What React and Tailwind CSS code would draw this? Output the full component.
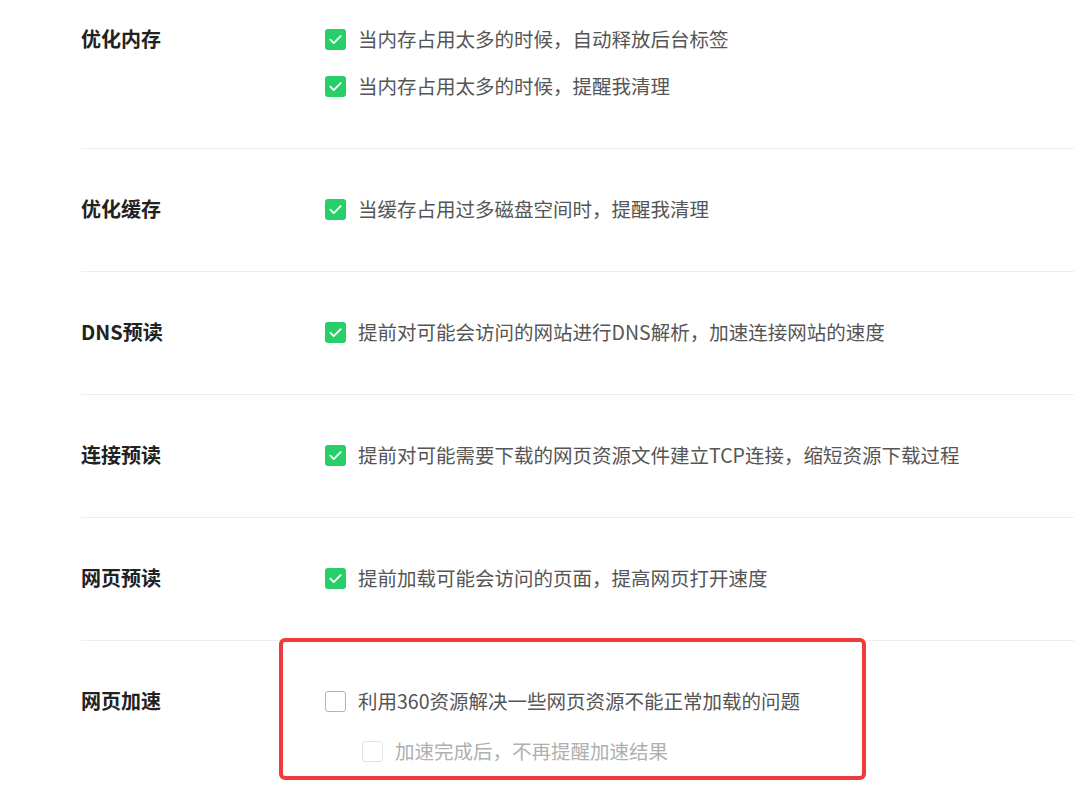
import React from 'react';

const sections = [
  {
    label: '优化内存',
    options: [
      { text: '当内存占用太多的时候，自动释放后台标签', checked: true },
      { text: '当内存占用太多的时候，提醒我清理', checked: true },
    ],
  },
  { label: '优化缓存', options: [{ text: '当缓存占用过多磁盘空间时，提醒我清理', checked: true }] },
  { label: 'DNS预读', options: [{ text: '提前对可能会访问的网站进行DNS解析，加速连接网站的速度', checked: true }] },
  { label: '连接预读', options: [{ text: '提前对可能需要下载的网页资源文件建立TCP连接，缩短资源下载过程', checked: true }] },
  { label: '网页预读', options: [{ text: '提前加载可能会访问的页面，提高网页打开速度', checked: true }] },
  {
    label: '网页加速',
    options: [
      { text: '利用360资源解决一些网页资源不能正常加载的问题', checked: false },
      { text: '加速完成后，不再提醒加速结果', checked: false, disabled: true, indent: true },
    ],
  },
];

const Checkbox = ({ checked, disabled }) => {
  if (checked) {
    return (
      <span className="w-[21px] h-[21px] rounded-[3px] bg-[#26cf68] flex items-center justify-center shrink-0">
        <svg width="15" height="15" viewBox="0 0 16 16" fill="none">
          <path d="M2.5 8.2l3.6 3.6 7.4-7.4" stroke="#fff" strokeWidth="2" strokeLinecap="round" strokeLinejoin="round" />
        </svg>
      </span>
    );
  }
  return (
    <span
      className={`w-[21px] h-[21px] rounded-[3px] border-[1.5px] bg-white shrink-0 ${
        disabled ? 'border-[#e2e2e2]' : 'border-[#b4b4b4]'
      }`}
    />
  );
};

const Section = ({ section, first, last }) => (
  <div
    className={`flex border-[#eeeeee] ${last ? '' : 'border-b'} ${first ? 'pt-[24px]' : 'pt-[45px]'} ${
      last ? 'pb-[30px]' : 'pb-[47px]'
    }`}
  >
    <div className="w-[244px] shrink-0 text-[20px] leading-[30px] font-bold text-[#222]">{section.label}</div>
    <div className={`flex flex-col ${last ? 'gap-[20px]' : 'gap-[17px]'}`}>
      {section.options.map((opt) => (
        <label key={opt.text} className={`flex items-center gap-[12px] h-[30px] ${opt.indent ? 'pl-[37px]' : ''}`}>
          <Checkbox checked={opt.checked} disabled={opt.disabled} />
          <span className={`text-[19.5px] leading-[30px] ${opt.disabled ? 'text-[#b0b0b0]' : 'text-[#555]'}`}>{opt.text}</span>
        </label>
      ))}
    </div>
  </div>
);

export default function App() {
  return (
    <div
      className="w-[1074px] h-[801px] bg-white overflow-hidden"
      style={{ fontFamily: '"Noto Sans CJK SC", "Noto Sans", sans-serif' }}
    >
      <div className="relative pl-[81px]">
        {sections.map((s, i) => (
          <Section key={s.label} section={s} first={i === 0} last={i === sections.length - 1} />
        ))}
        {/* red highlight annotation */}
        <div className="absolute left-[279px] top-[638px] w-[587px] h-[142px] border-4 border-[#ef3b3d] rounded-[6px] pointer-events-none" />
      </div>
    </div>
  );
}
